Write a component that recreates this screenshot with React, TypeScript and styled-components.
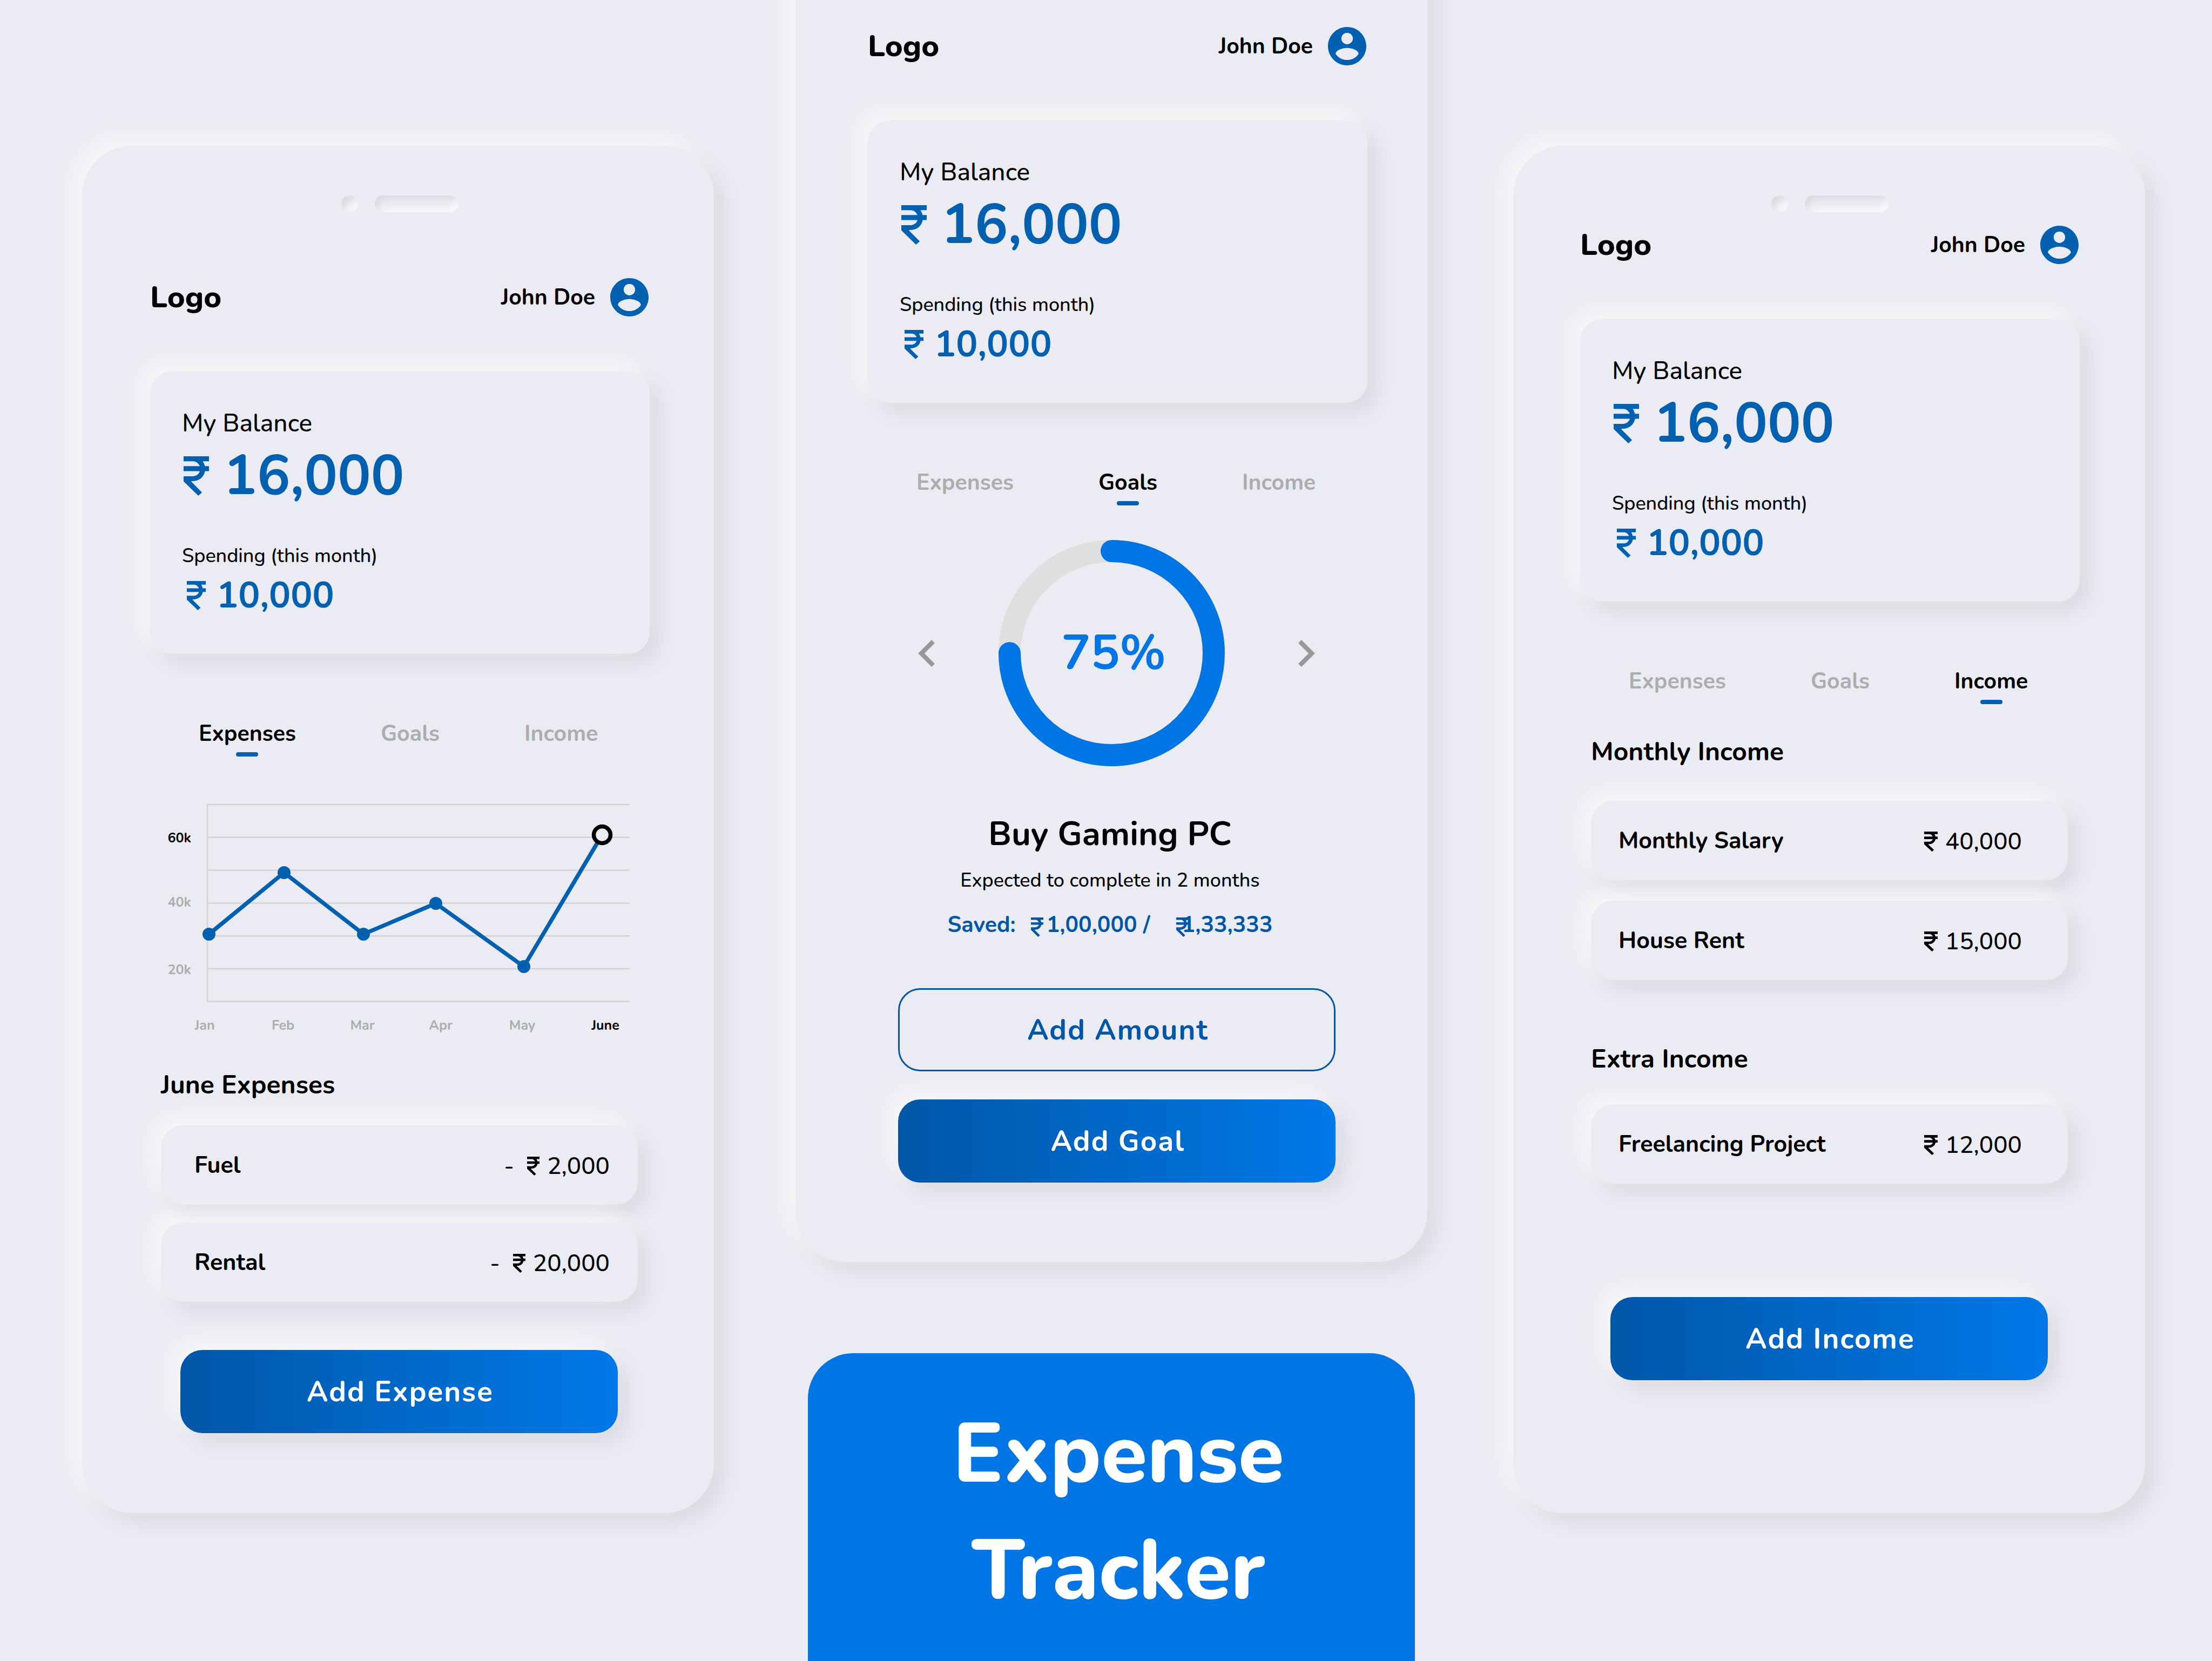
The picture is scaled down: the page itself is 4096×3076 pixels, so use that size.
import React from "react";
import styled, { createGlobalStyle, css } from "styled-components";
import { MdChevronLeft, MdChevronRight } from "react-icons/md";

const color = {
  surface: "#ebebf4",
  ink: "#000000",
  brand: "#0260b1",
  brandDeep: "#0057a8",
  bright: "#0075e3",
  muted: "#adadad",
  grid: "#d3d3d3",
  track: "#dfdfdf",
  chevron: "#989898",
};

const raised = css`
  background: ${color.surface};
  box-shadow: -18px -18px 36px rgba(255, 255, 250, 0.6),
    18px 18px 36px rgba(0, 0, 0, 0.07);
`;

const GlobalStyle = createGlobalStyle`
  *, *::before, *::after { box-sizing: border-box; }
  body {
    margin: 0;
    background: ${color.surface};
    color: ${color.ink};
    font-family: Nunito, Lato, "Open Sans", sans-serif;
  }
  h1, h2, h3, p, ul, dl, dd { margin: 0; padding: 0; }
  button { font: inherit; color: inherit; border: 0; background: none; padding: 0; cursor: pointer; }
`;

/* ---------- page ---------- */

const Showcase = styled.main`
  display: flex;
  align-items: stretch;
  min-height: 100vh;
  padding: 0 124px 0 152px;
  overflow: hidden;
`;

const Column = styled.div<{ $top: number; $gutter?: number }>`
  flex: 1 1 0;
  min-width: 0;
  display: flex;
  flex-direction: column;
  margin-top: ${(p) => p.$top}px;
  margin-right: ${(p) => p.$gutter ?? 0}px;
`;

const Poster = styled.header`
  flex: 1;
  margin: 169px 23px 0;
  padding: 79px 0 0 26px;
  border-radius: 84px 84px 0 0;
  background: ${color.bright};
`;

const PosterTitle = styled.h1`
  color: #fff;
  font-size: 155px;
  line-height: 216px;
  font-weight: 800;
  text-align: center;
`;

/* ---------- phone ---------- */

const Phone = styled.section<{ $left: number; $right: number }>`
  ${raised}
  min-height: 2532px;
  padding: 92px ${(p) => p.$right}px 147px ${(p) => p.$left}px;
  border-radius: 92px;
`;

const Speaker = styled.div`
  display: flex;
  justify-content: center;
  gap: 31px;
`;

const Slot = styled.span<{ $width: number }>`
  width: ${(p) => p.$width}px;
  height: 31px;
  border-radius: 16px;
  box-shadow: inset 6px 6px 12px rgba(0, 0, 0, 0.08),
    inset -6px -6px 12px rgba(255, 255, 255, 0.7);
`;

const TopBar = styled.div<{ $gap: number }>`
  display: flex;
  align-items: center;
  justify-content: space-between;
  height: 71px;
  margin-top: ${(p) => p.$gap}px;
  padding-right: 2px;
`;

const Logo = styled.h2`
  font-size: 56px;
  line-height: 71px;
  font-weight: 800;
`;

const User = styled.button`
  display: flex;
  align-items: center;
  gap: 28px;
  font-size: 41px;
  line-height: 50px;
  font-weight: 700;
`;

const Avatar = styled.svg`
  width: 71px;
  height: 71px;
  fill: ${color.brand};
`;

const BalanceCard = styled.div`
  ${raised}
  margin-top: 102px;
  padding: 66px 59px 72px;
  border-radius: 40px;
`;

const CardLabel = styled.p<{ $small?: boolean }>`
  font-size: ${(p) => (p.$small ? 36 : 46)}px;
  line-height: ${(p) => (p.$small ? 44 : 60)}px;
  font-weight: 500;
  margin-top: ${(p) => (p.$small ? 72 : 0)}px;
`;

const Money = styled.p<{ $small?: boolean }>`
  display: flex;
  align-items: center;
  color: ${color.brand};
  font-weight: 700;
  font-size: ${(p) => (p.$small ? 67 : 103)}px;
  line-height: ${(p) => (p.$small ? 72 : 110)}px;
  margin-top: ${(p) => (p.$small ? 15 : 12)}px;
  padding-left: ${(p) => (p.$small ? 9 : 3)}px;
  gap: ${(p) => (p.$small ? 20 : 27)}px;
`;

const RupeeIcon = styled.svg<{ $w: number; $h: number }>`
  flex: none;
  width: ${(p) => p.$w}px;
  height: ${(p) => p.$h}px;
  fill: currentColor;
`;

const Rupee = ({ w, h }: { w: number; h: number }) => (
  <RupeeIcon $w={w} $h={h} viewBox="0 0 10.2 16" preserveAspectRatio="none" role="img" aria-label="₹">
    <path d="M0 0H10.2V2H7.7C8.1 2.6 8.4 3.3 8.55 4H10.2V6H8.6C8.2 8.4 6.2 10.1 3.4 10.1L3 10.2L7.4 14.7L5.9 16L0 10.2V8.1H3.5C5.1 8.1 6.2 7.2 6.5 6H0V4H6.5C6 2.8 5 2 3.8 2H0Z" />
  </RupeeIcon>
);

/* ---------- tabs ---------- */

const Tabs = styled.div`
  display: flex;
  gap: 157px;
  margin-top: 123px;
  padding-left: 90px;
`;

const Tab = styled.button<{ $active: boolean }>`
  display: flex;
  flex-direction: column;
  align-items: center;
  gap: 9px;
  font-size: 41px;
  line-height: 50px;
  font-weight: 700;
  color: ${(p) => (p.$active ? color.ink : color.muted)};

  &::after {
    content: "";
    width: 41px;
    height: 8px;
    border-radius: 4px;
    background: ${(p) => (p.$active ? color.brand : "transparent")};
  }
`;

/* ---------- chart ---------- */

const Chart = styled.svg`
  display: block;
  width: 100%;
  margin-top: 79px;

  text {
    font-size: 25px;
    font-weight: 700;
    fill: ${color.muted};
  }
  text.current {
    fill: ${color.ink};
  }
`;

/* ---------- lists ---------- */

const SectionTitle = styled.h3<{ $gap: number }>`
  margin: ${(p) => p.$gap}px 0 0 20px;
  font-size: 48px;
  line-height: 60px;
  font-weight: 700;
`;

const List = styled.ul<{ $top: number; $gap?: number }>`
  display: flex;
  flex-direction: column;
  gap: ${(p) => p.$gap ?? 0}px;
  margin: ${(p) => p.$top}px 22px 0 20px;
  list-style: none;
`;

const Entry = styled.li<{ $left: number; $right: number }>`
  ${raised}
  display: flex;
  align-items: center;
  justify-content: space-between;
  height: 147px;
  padding: 0 ${(p) => p.$right}px 0 ${(p) => p.$left}px;
  border-radius: 41px;
`;

const EntryName = styled.span`
  font-size: 43px;
  line-height: 56px;
  font-weight: 700;
`;

const EntryAmount = styled.span`
  display: flex;
  align-items: center;
  gap: 14px;
  padding-top: 4px;
  font-size: 44px;
  line-height: 56px;
  font-weight: 500;
`;

const Minus = styled.span`
  margin-right: 10px;
`;

/* ---------- buttons ---------- */

const Actions = styled.div<{ $top: number }>`
  display: flex;
  flex-direction: column;
  gap: 52px;
  margin: ${(p) => p.$top}px 59px 0 56px;
`;

const Action = styled.button<{ $outline?: boolean }>`
  height: 154px;
  padding: 2px 0 0 4px;
  border-radius: 41px;
  font-size: 53px;
  line-height: 64px;
  font-weight: 700;
  letter-spacing: 2px;
  ${(p) =>
    p.$outline
      ? css`
          border: 3px solid ${color.brandDeep};
          color: ${color.brandDeep};
        `
      : css`
          ${raised}
          background: linear-gradient(90deg, ${color.brandDeep}, #0078e8);
          color: #fff;
        `}
`;

/* ---------- goal ---------- */

const GoalCarousel = styled.div`
  display: grid;
  grid-template-columns: 149px 419px 1fr;
  align-items: center;
  margin-top: 64px;
  padding: 0 97px 0 93px;
`;

const Arrow = styled.button<{ $end?: boolean }>`
  display: flex;
  justify-self: ${(p) => (p.$end ? "end" : "start")};
  color: ${color.chevron};

  svg {
    width: 31px;
    height: 50px;
  }
`;

const Ring = styled.svg`
  display: block;
  width: 419px;
  height: 419px;

  text {
    font-size: 90px;
    font-weight: 700;
    fill: ${color.bright};
  }
`;

const Goal = styled.div`
  display: flex;
  flex-direction: column;
  align-items: center;
  margin-top: 89px;
  padding-right: 28px;
`;

const GoalName = styled.h3`
  font-size: 62px;
  line-height: 74px;
  font-weight: 700;
`;

const GoalNote = styled.p`
  margin-top: 27px;
  font-size: 36px;
  line-height: 44px;
  font-weight: 500;
`;

const Saved = styled.p`
  display: flex;
  align-items: center;
  margin-top: 35px;
  font-size: 41px;
  line-height: 50px;
  font-weight: 700;
  color: ${color.brandDeep};
  white-space: nowrap;

  svg {
    margin-top: 7px;
  }
`;

const SavedLabel = styled.span`
  margin-right: 28px;
`;

const SavedSoFar = styled.span`
  margin: 0 48px 0 6px;
`;

const SavedTarget = styled.span`
  margin-left: -12px;
`;

/* ---------- composed parts ---------- */

const tabNames = ["Expenses", "Goals", "Income"];

type ScreenProps = {
  tab: string;
  left: number;
  right: number;
  headerGap: number;
  children: React.ReactNode;
};

function Screen({ tab, left, right, headerGap, children }: ScreenProps) {
  return (
    <Phone $left={left} $right={right}>
      <Speaker>
        <Slot $width={31} />
        <Slot $width={155} />
      </Speaker>
      <TopBar $gap={headerGap}>
        <Logo>Logo</Logo>
        <User type="button">
          John Doe
          <Avatar viewBox="2 2 20 20" aria-hidden="true">
            <path d="M12 2C6.48 2 2 6.48 2 12s4.48 10 10 10 10-4.48 10-10S17.52 2 12 2zm0 3c1.66 0 3 1.34 3 3s-1.34 3-3 3-3-1.34-3-3 1.34-3 3-3zm0 14.2c-2.5 0-4.71-1.28-6-3.22.03-1.99 4-3.08 6-3.08 1.99 0 5.97 1.09 6 3.08-1.29 1.94-3.5 3.22-6 3.22z" />
          </Avatar>
        </User>
      </TopBar>
      <BalanceCard>
        <CardLabel>My Balance</CardLabel>
        <Money>
          <Rupee w={47} h={73} />
          16,000
        </Money>
        <CardLabel $small>Spending (this month)</CardLabel>
        <Money $small>
          <Rupee w={35} h={54} />
          10,000
        </Money>
      </BalanceCard>
      <Tabs role="tablist">
        {tabNames.map((name) => (
          <Tab key={name} type="button" role="tab" aria-selected={name === tab} $active={name === tab}>
            {name}
          </Tab>
        ))}
      </Tabs>
      {children}
    </Phone>
  );
}

const points = [
  { month: "Jan", x: 109, y: 250, label: 101 },
  { month: "Feb", x: 248, y: 136, label: 246 },
  { month: "Mar", x: 395, y: 250, label: 393 },
  { month: "Apr", x: 529, y: 193, label: 538 },
  { month: "May", x: 692, y: 310, label: 689 },
  { month: "June", x: 837, y: 66, label: 843 },
];

const scale = [
  { text: "60k", y: 80 },
  { text: "40k", y: 199 },
  { text: "20k", y: 324 },
];

function ExpenseChart() {
  const last = points[points.length - 1];
  return (
    <Chart viewBox="0 0 925 440" role="img" aria-label="Expenses by month">
      <g stroke={color.grid} strokeWidth="2.5" fill="none">
        {[0, 1, 2, 3, 4, 5, 6].map((i) => (
          <path key={i} d={`M105 ${10 + i * 60.8}H888`} />
        ))}
        <path d="M106 10V375" />
      </g>
      <polyline
        points={points.map((p) => `${p.x},${p.y}`).join(" ")}
        fill="none"
        stroke={color.brand}
        strokeWidth="7.5"
      />
      {points.slice(0, -1).map((p) => (
        <circle key={p.month} cx={p.x} cy={p.y} r="12" fill={color.brand} />
      ))}
      <circle cx={last.x} cy={last.y} r="15.5" fill={color.surface} stroke={color.ink} strokeWidth="7.5" />
      {scale.map((s, i) => (
        <text key={s.text} x="76" y={s.y} textAnchor="end" className={i === 0 ? "current" : undefined}>
          {s.text}
        </text>
      ))}
      {points.map((p) => (
        <text key={p.month} x={p.label} y="427" textAnchor="middle" className={p === last ? "current" : undefined}>
          {p.month}
        </text>
      ))}
    </Chart>
  );
}

function ProgressRing() {
  return (
    <Ring viewBox="0 0 419 419" role="img" aria-label="75% saved">
      <circle cx="209.5" cy="209.5" r="189" fill="none" stroke={color.track} strokeWidth="41" />
      <path
        d="M209.5 20.5A189 189 0 1 1 20.5 209.5"
        fill="none"
        stroke={color.bright}
        strokeWidth="41"
        strokeLinecap="round"
      />
      <text x="213" y="239" textAnchor="middle">
        75%
      </text>
    </Ring>
  );
}

function ExpenseEntry({ name, amount }: { name: string; amount: string }) {
  return (
    <Entry $left={62} $right={52}>
      <EntryName>{name}</EntryName>
      <EntryAmount>
        <Minus>-</Minus>
        <Rupee w={23} h={35} />
        {amount}
      </EntryAmount>
    </Entry>
  );
}

function IncomeEntry({ name, amount }: { name: string; amount: string }) {
  return (
    <Entry $left={51} $right={85}>
      <EntryName>{name}</EntryName>
      <EntryAmount>
        <Rupee w={25} h={37} />
        {amount}
      </EntryAmount>
    </Entry>
  );
}

export default function App() {
  return (
    <>
      <GlobalStyle />
      <Showcase>
        <Column $top={270} $gutter={151}>
          <Screen tab="Expenses" left={126} right={119} headerGap={122}>
            <ExpenseChart />
            <SectionTitle $gap={59}>June Expenses</SectionTitle>
            <List $top={45} $gap={33}>
              <ExpenseEntry name="Fuel" amount="2,000" />
              <ExpenseEntry name="Rental" amount="20,000" />
            </List>
            <Actions $top={89}>
              <Action type="button">Add Expense</Action>
            </Actions>
          </Screen>
        </Column>

        <Column $top={-195} $gutter={159}>
          <Screen tab="Goals" left={134} right={111} headerGap={122}>
            <GoalCarousel>
              <Arrow type="button" aria-label="Previous goal">
                <MdChevronLeft viewBox="8 6 7.41 12" />
              </Arrow>
              <ProgressRing />
              <Arrow type="button" aria-label="Next goal" $end>
                <MdChevronRight viewBox="8.59 6 7.41 12" />
              </Arrow>
            </GoalCarousel>
            <Goal>
              <GoalName>Buy Gaming PC</GoalName>
              <GoalNote>Expected to complete in 2 months</GoalNote>
              <Saved>
                <SavedLabel>Saved:</SavedLabel>
                <Rupee w={23} h={36} />
                <SavedSoFar>1,00,000 /</SavedSoFar>
                <Rupee w={23} h={36} />
                <SavedTarget>1,33,333</SavedTarget>
              </Saved>
            </Goal>
            <Actions $top={92}>
              <Action type="button" $outline>
                Add Amount
              </Action>
              <Action type="button">Add Goal</Action>
            </Actions>
          </Screen>
          <Poster>
            <PosterTitle>
              Expense
              <br />
              Tracker
            </PosterTitle>
          </Poster>
        </Column>

        <Column $top={270}>
          <Screen tab="Income" left={124} right={121} headerGap={25}>
            <SectionTitle $gap={58}>Monthly Income</SectionTitle>
            <List $top={61} $gap={38}>
              <IncomeEntry name="Monthly Salary" amount="40,000" />
              <IncomeEntry name="House Rent" amount="15,000" />
            </List>
            <SectionTitle $gap={116}>Extra Income</SectionTitle>
            <List $top={54}>
              <IncomeEntry name="Freelancing Project" amount="12,000" />
            </List>
            <Actions $top={210}>
              <Action type="button">Add Income</Action>
            </Actions>
          </Screen>
        </Column>
      </Showcase>
    </>
  );
}
